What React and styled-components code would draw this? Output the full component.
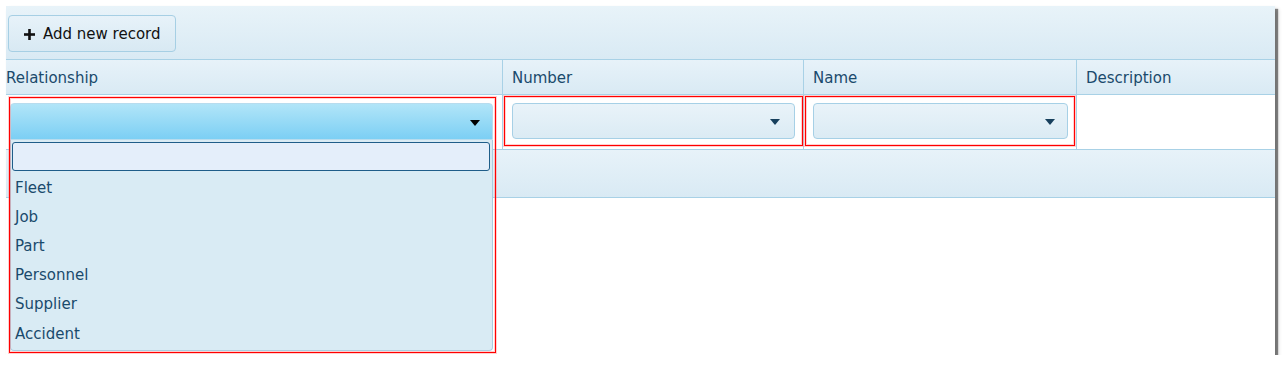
import React from "react";
import styled, { createGlobalStyle } from "styled-components";

const Global = createGlobalStyle`
  html, body { margin: 0; padding: 0; background: #fff; }
  body { font-family: "DejaVu Sans", Verdana, sans-serif; font-size: 15px; }
`;

const Panel = styled.div`
  margin: 6px 0 0 6px;
  width: 1269px;
  height: 349px;
  background: #fff;
  box-shadow: 3px 3px 1px rgba(0, 0, 0, 0.45), 3px 3px 4px rgba(0, 0, 0, 0.2);
  position: relative;
  display: flex;
  flex-direction: column;
`;

const Toolbar = styled.div`
  height: 54px;
  box-sizing: border-box;
  display: flex;
  align-items: center;
  padding-left: 2px;
  background: linear-gradient(#e8f3f9, #d9eaf4);
  border-bottom: 1px solid #a8d1e6;
`;

const AddButton = styled.button`
  height: 37px;
  width: 168px;
  box-sizing: border-box;
  display: flex;
  align-items: center;
  gap: 8px;
  padding: 2px 0 0 15px;
  border: 1px solid #a6cfe4;
  border-radius: 4px;
  background: linear-gradient(#e7f2f9, #d8e9f3);
  font-family: inherit;
  font-size: 15px;
  color: #111;
  margin-top: 1px;
`;

const Row = styled.div`
  display: grid;
  grid-template-columns: 497px 301px 273px 1fr;
  height: ${(p) => p.$h}px;
  box-sizing: border-box;
  border-bottom: 1px solid #a8d1e6;
  background: ${(p) => (p.$head ? "linear-gradient(#e7f2f9, #d9eaf4)" : "#fff")};
`;

const HeadCell = styled.div`
  border-right: ${(p) => (p.$last ? "none" : "1px solid #a8d1e6")};
  display: flex;
  align-items: center;
  padding-left: ${(p) => (p.$first ? 0 : 9)}px;
  padding-top: 2px;
  color: #1a4a6c;
`;

const Cell = styled.div`
  position: relative;
  border-right: ${(p) => (p.$last ? "none" : "1px solid #a8d1e6")};
  box-sizing: border-box;
`;

const Annot = styled.div`
  box-sizing: border-box;
  border: 1px solid #f00;
  box-shadow: 0 0 0 1px rgba(255, 120, 120, 0.35), inset 0 0 0 1px rgba(255, 120, 120, 0.35);
  margin: 1px ${(p) => p.$mr}px 0 ${(p) => p.$ml}px;
  height: 50px;
  padding: 6px ${(p) => p.$pr}px 0 ${(p) => p.$pl}px;
`;

const Select = styled.div`
  box-sizing: border-box;
  height: ${(p) => p.$h || 37}px;
  display: flex;
  align-items: center;
  justify-content: flex-end;
  padding-right: ${(p) => p.$pr || 14}px;
  border: 1px solid ${(p) => (p.$open ? "#b7dcee" : "#a6d0e6")};
  border-radius: ${(p) => (p.$open ? "4px 4px 0 0" : "4px")};
  background: ${(p) =>
    p.$open ? "linear-gradient(#b1e5f8, #7ccff4)" : "linear-gradient(#e9f3f9, #dbebf4)"};
`;

const Arrow = styled.span`
  width: 0;
  height: 0;
  border-left: 5px solid transparent;
  border-right: 5px solid transparent;
  border-top: 6px solid ${(p) => p.$c};
  margin-top: 2px;
`;

const Overlay = styled.div`
  position: absolute;
  left: 3px;
  top: 2px;
  width: 487px;
  height: 256px;
  box-sizing: border-box;
  border: 1px solid #f00;
  box-shadow: 0 0 0 1px rgba(255, 120, 120, 0.35), inset 0 0 0 1px rgba(255, 120, 120, 0.35);
  z-index: 3;
  pointer-events: none;
`;

const Combo = styled.div`
  position: absolute;
  left: 4px;
  top: 8px;
  width: 483px;
  z-index: 2;
  display: flex;
  flex-direction: column;
`;

const Popup = styled.div`
  box-sizing: border-box;
  height: 211px;
  background: #d9ebf4;
  border: 1px solid #a9cde0;
  border-top: none;
  border-radius: 0 0 4px 4px;
  padding: 2px 1px 0 1px;
`;

const Search = styled.div`
  box-sizing: border-box;
  height: 29px;
  border: 1px solid #1f5d89;
  border-radius: 3px;
  background: #e4eefa;
  margin-right: 1px;
  margin-bottom: 2px;
`;

const Item = styled.div`
  height: 29.2px;
  display: flex;
  align-items: center;
  padding-left: 3px;
  color: #1a4a6c;
`;

const Bar = styled.div`
  height: 48px;
  box-sizing: border-box;
  background: linear-gradient(#e7f2f9, #d9eaf4);
  border-bottom: 1px solid #a8d1e6;
`;

const PlusIcon = () => (
  <svg width="11" height="11" viewBox="0 0 11 11">
    <rect x="0" y="4.2" width="11" height="2.6" fill="#111" />
    <rect x="4.2" y="0" width="2.6" height="11" fill="#111" />
  </svg>
);

const items = ["Fleet", "Job", "Part", "Personnel", "Supplier", "Accident"];

export default function App() {
  return (
    <>
      <Global />
      <Panel>
        <Toolbar>
          <AddButton>
            <PlusIcon />
            Add new record
          </AddButton>
        </Toolbar>
        <Row $head $h={35}>
          <HeadCell $first>Relationship</HeadCell>
          <HeadCell>Number</HeadCell>
          <HeadCell>Name</HeadCell>
          <HeadCell $last>Description</HeadCell>
        </Row>
        <Row $h={55}>
          <Cell>
            <Combo>
              <Select $open $pr={12}>
                <Arrow $c="#000" />
              </Select>
              <Popup>
                <Search />
                {items.map((t) => (
                  <Item key={t}>{t}</Item>
                ))}
              </Popup>
            </Combo>
            <Overlay />
          </Cell>
          <Cell>
            <Annot $ml={1} $mr={0} $pl={7} $pr={7}>
              <Select $h={36} $pr={14}>
                <Arrow $c="#17405d" />
              </Select>
            </Annot>
          </Cell>
          <Cell>
            <Annot $ml={1} $mr={1} $pl={7} $pr={6}>
              <Select $h={36} $pr={12}>
                <Arrow $c="#17405d" />
              </Select>
            </Annot>
          </Cell>
          <Cell $last />
        </Row>
        <Bar />
      </Panel>
    </>
  );
}
